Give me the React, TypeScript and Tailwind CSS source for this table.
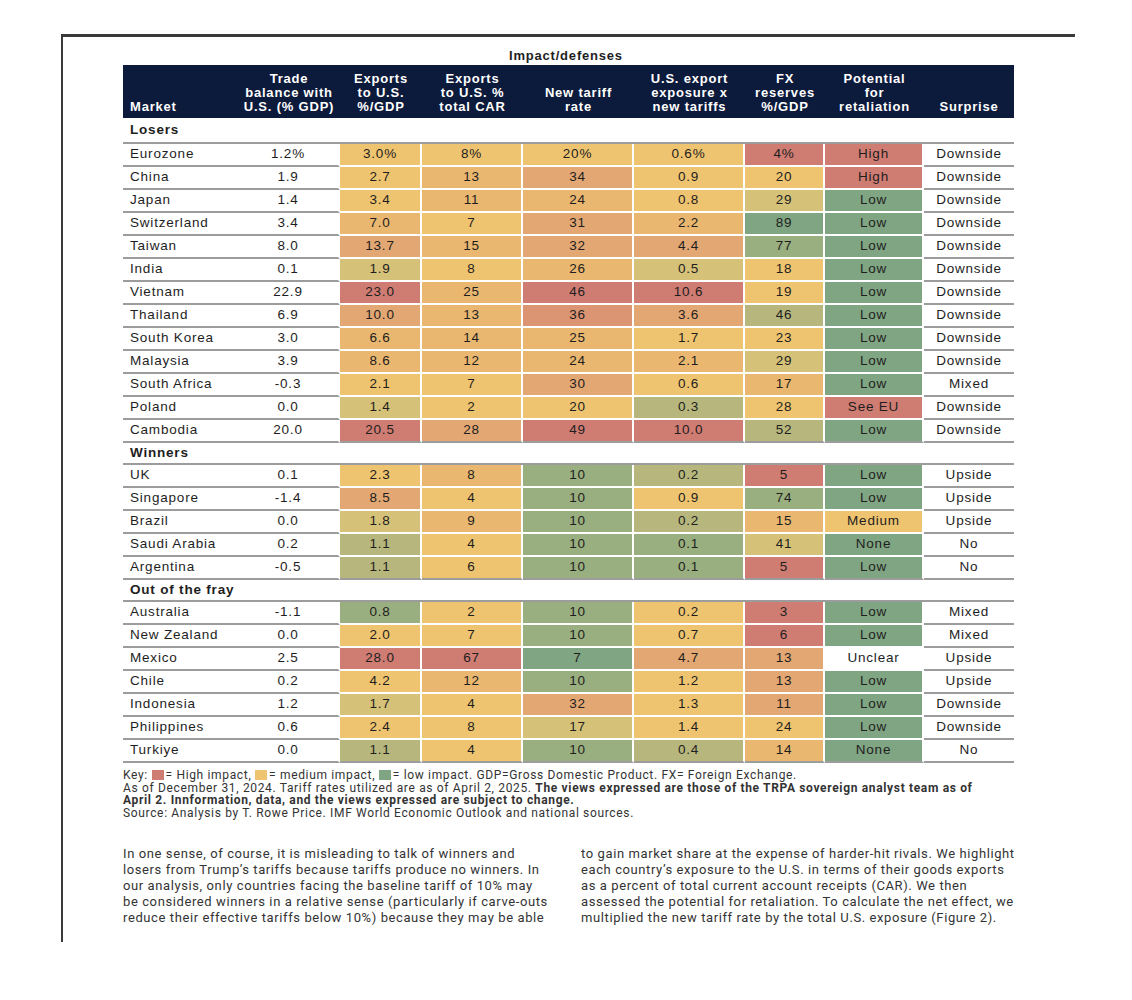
import React from 'react'

// heat map shades, high impact (red) → low impact (green)
const heat = {
  R: 'bg-[#cf7c73]',
  RO: 'bg-[#db9573]',
  O: 'bg-[#e2a773]',
  LO: 'bg-[#e9b770]',
  Y: 'bg-[#efc470]',
  YG: 'bg-[#d5c278]',
  OG: 'bg-[#b7b77d]',
  G: 'bg-[#9aaf7f]',
  DG: 'bg-[#80a583]',
  W: 'bg-white',
} as const

type Shade = keyof typeof heat
type Cell = [string, Shade]
type Row = { m: string; t: string; c: Cell[]; s: string }
type Group = { name: string; h: string; rows: Row[] }

const groups: Group[] = [
  {
    name: 'Losers',
    h: 'h-[26px]',
    rows: [
      { m: 'Eurozone', t: '1.2%', c: [['3.0%', 'Y'], ['8%', 'Y'], ['20%', 'Y'], ['0.6%', 'Y'], ['4%', 'R'], ['High', 'R']], s: 'Downside' },
      { m: 'China', t: '1.9', c: [['2.7', 'Y'], ['13', 'LO'], ['34', 'O'], ['0.9', 'Y'], ['20', 'Y'], ['High', 'R']], s: 'Downside' },
      { m: 'Japan', t: '1.4', c: [['3.4', 'Y'], ['11', 'LO'], ['24', 'LO'], ['0.8', 'Y'], ['29', 'YG'], ['Low', 'DG']], s: 'Downside' },
      { m: 'Switzerland', t: '3.4', c: [['7.0', 'LO'], ['7', 'Y'], ['31', 'O'], ['2.2', 'LO'], ['89', 'DG'], ['Low', 'DG']], s: 'Downside' },
      { m: 'Taiwan', t: '8.0', c: [['13.7', 'O'], ['15', 'LO'], ['32', 'O'], ['4.4', 'O'], ['77', 'G'], ['Low', 'DG']], s: 'Downside' },
      { m: 'India', t: '0.1', c: [['1.9', 'YG'], ['8', 'Y'], ['26', 'LO'], ['0.5', 'YG'], ['18', 'Y'], ['Low', 'DG']], s: 'Downside' },
      { m: 'Vietnam', t: '22.9', c: [['23.0', 'R'], ['25', 'LO'], ['46', 'R'], ['10.6', 'R'], ['19', 'Y'], ['Low', 'DG']], s: 'Downside' },
      { m: 'Thailand', t: '6.9', c: [['10.0', 'O'], ['13', 'LO'], ['36', 'RO'], ['3.6', 'O'], ['46', 'OG'], ['Low', 'DG']], s: 'Downside' },
      { m: 'South Korea', t: '3.0', c: [['6.6', 'LO'], ['14', 'LO'], ['25', 'LO'], ['1.7', 'Y'], ['23', 'Y'], ['Low', 'DG']], s: 'Downside' },
      { m: 'Malaysia', t: '3.9', c: [['8.6', 'LO'], ['12', 'LO'], ['24', 'LO'], ['2.1', 'LO'], ['29', 'YG'], ['Low', 'DG']], s: 'Downside' },
      { m: 'South Africa', t: '-0.3', c: [['2.1', 'Y'], ['7', 'Y'], ['30', 'O'], ['0.6', 'Y'], ['17', 'LO'], ['Low', 'DG']], s: 'Mixed' },
      { m: 'Poland', t: '0.0', c: [['1.4', 'YG'], ['2', 'Y'], ['20', 'Y'], ['0.3', 'OG'], ['28', 'Y'], ['See EU', 'R']], s: 'Downside' },
      { m: 'Cambodia', t: '20.0', c: [['20.5', 'R'], ['28', 'O'], ['49', 'R'], ['10.0', 'R'], ['52', 'OG'], ['Low', 'DG']], s: 'Downside' },
    ],
  },
  {
    name: 'Winners',
    h: 'h-[22px]',
    rows: [
      { m: 'UK', t: '0.1', c: [['2.3', 'Y'], ['8', 'LO'], ['10', 'G'], ['0.2', 'OG'], ['5', 'R'], ['Low', 'DG']], s: 'Upside' },
      { m: 'Singapore', t: '-1.4', c: [['8.5', 'O'], ['4', 'Y'], ['10', 'G'], ['0.9', 'Y'], ['74', 'G'], ['Low', 'DG']], s: 'Upside' },
      { m: 'Brazil', t: '0.0', c: [['1.8', 'YG'], ['9', 'LO'], ['10', 'G'], ['0.2', 'OG'], ['15', 'LO'], ['Medium', 'Y']], s: 'Upside' },
      { m: 'Saudi Arabia', t: '0.2', c: [['1.1', 'OG'], ['4', 'Y'], ['10', 'G'], ['0.1', 'G'], ['41', 'YG'], ['None', 'DG']], s: 'No' },
      { m: 'Argentina', t: '-0.5', c: [['1.1', 'OG'], ['6', 'Y'], ['10', 'G'], ['0.1', 'G'], ['5', 'R'], ['Low', 'DG']], s: 'No' },
    ],
  },
  {
    name: 'Out of the fray',
    h: 'h-[22px]',
    rows: [
      { m: 'Australia', t: '-1.1', c: [['0.8', 'G'], ['2', 'Y'], ['10', 'G'], ['0.2', 'Y'], ['3', 'R'], ['Low', 'DG']], s: 'Mixed' },
      { m: 'New Zealand', t: '0.0', c: [['2.0', 'Y'], ['7', 'Y'], ['10', 'G'], ['0.7', 'Y'], ['6', 'R'], ['Low', 'DG']], s: 'Mixed' },
      { m: 'Mexico', t: '2.5', c: [['28.0', 'R'], ['67', 'R'], ['7', 'DG'], ['4.7', 'O'], ['13', 'O'], ['Unclear', 'W']], s: 'Upside' },
      { m: 'Chile', t: '0.2', c: [['4.2', 'Y'], ['12', 'LO'], ['10', 'G'], ['1.2', 'Y'], ['13', 'O'], ['Low', 'DG']], s: 'Upside' },
      { m: 'Indonesia', t: '1.2', c: [['1.7', 'YG'], ['4', 'Y'], ['32', 'O'], ['1.3', 'Y'], ['11', 'O'], ['Low', 'DG']], s: 'Downside' },
      { m: 'Philippines', t: '0.6', c: [['2.4', 'Y'], ['8', 'Y'], ['17', 'YG'], ['1.4', 'Y'], ['24', 'Y'], ['Low', 'DG']], s: 'Downside' },
      { m: 'Turkiye', t: '0.0', c: [['1.1', 'OG'], ['4', 'Y'], ['10', 'G'], ['0.4', 'OG'], ['14', 'LO'], ['None', 'DG']], s: 'No' },
    ],
  },
]

const cols = 'grid grid-cols-[115px_102px_82px_101px_111px_111px_80px_99px_90px]'

const headers = [
  ['Market'],
  ['Trade', 'balance with', 'U.S. (% GDP)'],
  ['Exports', 'to U.S.', '%/GDP'],
  ['Exports', 'to U.S. %', 'total CAR'],
  ['New tariff', 'rate'],
  ['U.S. export', 'exposure x', 'new tariffs'],
  ['FX', 'reserves', '%/GDP'],
  ['Potential', 'for', 'retaliation'],
  ['Surprise'],
]

function DataRow({ row, last }: { row: Row; last: boolean }) {
  const line = 'border-b-2 border-b-[#9c9c9c]'
  return (
    <div className={cols}>
      <div className={`h-[23px] flex items-center pl-[7px] ${line}`}>{row.m}</div>
      <div className={`h-[23px] flex items-center justify-center border-r-2 border-r-white ${line}`}>{row.t}</div>
      {row.c.map(([v, shade], i) => (
        <div
          key={i}
          className={`h-[23px] flex items-center justify-center border-r-2 border-r-white ${heat[shade]} ${
            last ? line : 'border-b-2 border-b-white'
          }`}
        >
          {v}
        </div>
      ))}
      <div className={`h-[23px] flex items-center justify-center ${line}`}>{row.s}</div>
    </div>
  )
}

function Swatch({ color }: { color: string }) {
  return <span className={`inline-block w-[12px] h-[10px] align-[-1px] mr-[2px] ${color}`} />
}

export default function App() {
  return (
    <div className="bg-white w-[1132px] h-[1000px] pt-[34px]">
      <div className="ml-[61px] w-[1014px] h-[908px] border-t-[3px] border-l-2 border-[#3a3a3a] pl-[60px] pt-[10px]">
        <div className="font-['Liberation_Sans',Arial,sans-serif] text-[#1e1e1e] text-[13.5px] tracking-[0.8px] w-[891px]">
          <div className="h-[18px] leading-[18px] pl-[386px] text-[13px] font-bold">Impact/defenses</div>

          <div className={`${cols} bg-[#0c1a3b] h-[53px] text-white text-[13px] font-bold leading-[14px] tracking-[0.8px]`}>
            {headers.map((lines, i) => (
              <div key={i} className={`flex flex-col justify-end pb-[4px] ${i === 0 ? 'pl-[7px]' : 'items-center text-center'}`}>
                {lines.map((l) => (
                  <span key={l}>{l}</span>
                ))}
              </div>
            ))}
          </div>

          {groups.map((g) => (
            <div key={g.name}>
              <div className={`${g.h} flex items-center pl-[7px] font-bold border-b-2 border-[#9c9c9c]`}>{g.name}</div>
              {g.rows.map((r, i) => (
                <DataRow key={r.m} row={r} last={i === g.rows.length - 1} />
              ))}
            </div>
          ))}
        </div>

        <div className="mt-[6px] font-['Roboto',sans-serif] text-[12px] leading-[12.7px] tracking-[0.66px] text-[#333] whitespace-nowrap">
          <div>
            Key: <Swatch color="bg-[#cf7c73]" />= High impact, <Swatch color="bg-[#efc470]" />= medium impact,{' '}
            <Swatch color="bg-[#80a583]" />= low impact. GDP=Gross Domestic Product. FX= Foreign Exchange.
          </div>
          <div>
            As of December 31, 2024. Tariff rates utilized are as of April 2, 2025.{' '}
            <b>The views expressed are those of the TRPA sovereign analyst team as of</b>
          </div>
          <div className="font-bold">April 2. Innformation, data, and the views expressed are subject to change.</div>
          <div>Source: Analysis by T. Rowe Price. IMF World Economic Outlook and national sources.</div>
        </div>

        <div className="mt-[26px] grid grid-cols-[458px_1fr] font-['Roboto',sans-serif] text-[13px] leading-[16px] tracking-[0.6px] text-[#333] whitespace-nowrap">
          <div>
            <p>In one sense, of course, it is misleading to talk of winners and</p>
            <p>losers from Trump’s tariffs because tariffs produce no winners. In</p>
            <p>our analysis, only countries facing the baseline tariff of 10% may</p>
            <p>be considered winners in a relative sense (particularly if carve-outs</p>
            <p>reduce their effective tariffs below 10%) because they may be able</p>
          </div>
          <div>
            <p>to gain market share at the expense of harder-hit rivals. We highlight</p>
            <p>each country’s exposure to the U.S. in terms of their goods exports</p>
            <p>as a percent of total current account receipts (CAR). We then</p>
            <p>assessed the potential for retaliation. To calculate the net effect, we</p>
            <p>multiplied the new tariff rate by the total U.S. exposure (Figure 2).</p>
          </div>
        </div>
      </div>
    </div>
  )
}
